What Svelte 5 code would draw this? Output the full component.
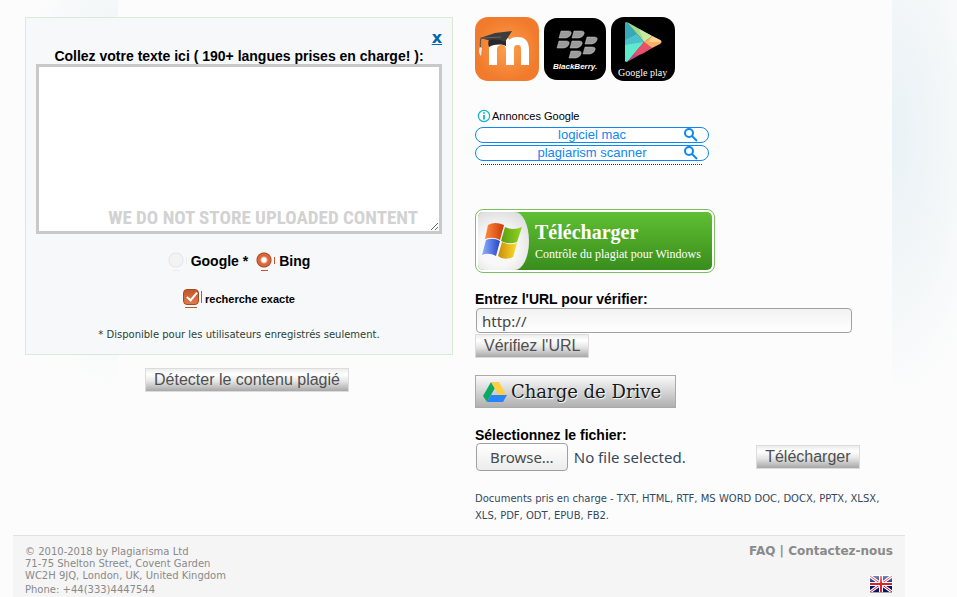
<script lang="ts">
  let text = $state('');
  let engine = $state('bing');
  let exact = $state(true);
  let url = $state('http://');
  let fileName = $state('No file selected.');

  const ads = ['logiciel mac', 'plagiarism scanner'];

  function clearText(e: MouseEvent) {
    e.preventDefault();
    text = '';
  }

  function pickFile(e: Event) {
    const input = e.target as HTMLInputElement;
    fileName = input.files?.[0]?.name ?? 'No file selected.';
  }
</script>

<div class="page">
  <main class="columns">
    <section class="checker">
      <div class="panel">
        <a class="close" href="#clear" onclick={clearText}>x</a>
        <label class="label" for="text">Collez votre texte ici ( 190+ langues prises en charge! ):</label>
        <div class="text-wrap">
          <textarea id="text" bind:value={text}></textarea>
          <span class="watermark">WE DO NOT STORE UPLOADED CONTENT</span>
        </div>

        <div class="engines">
          <label class="engine">
            <input type="radio" name="engine" value="google" disabled bind:group={engine} />
            <span>Google *</span>
          </label>
          <label class="engine">
            <input type="radio" name="engine" value="bing" bind:group={engine} />
            <span>Bing</span>
          </label>
        </div>

        <label class="exact">
          <input type="checkbox" bind:checked={exact} />
          <span>recherche exacte</span>
        </label>

        <p class="note">* Disponible pour les utilisateurs enregistrés seulement.</p>
      </div>
      <div class="submit">
        <button class="button">Détecter le contenu plagié</button>
      </div>
    </section>

    <section class="sources">
      <div class="apps">
        <a href="#moodle" aria-label="Moodle">
          <svg width="64" height="64" viewBox="0 0 64 64">
            <defs>
              <radialGradient id="orange">
                <stop offset="0" stop-color="#fba04e" />
                <stop offset="1" stop-color="#f27a2c" />
              </radialGradient>
            </defs>
            <rect width="64" height="64" rx="13" fill="url(#orange)" />
            <path d="M18 48V33c0-6 3-9 8.500-9s8.500 3 8.500 9v15M35 48V33c0-6 2-9 7.500-9s7.500 3 7.500 9v15" stroke="#fff" stroke-width="8" fill="none" />
            <path d="M14 22c-1 3-1 6 0 8 6-3 12-3 17-1v-7z" fill="#292929" />
            <path d="M5 21L20 16 37 14l-7 11c-5-3-12-3-17-2z" fill="#3d3d3d" />
            <path d="M8 21l18-1" stroke="#666" fill="none" />
            <path d="M6 21c-1 5-1 8 0 13" stroke="#4a4a4a" fill="none" />
            <path d="M5 30c-2 3-1 7 1 9l1-8z" fill="#eee" />
          </svg>
        </a>
        <a href="#blackberry" aria-label="BlackBerry">
          <svg width="64" height="64" viewBox="0 0 64 64">
            <rect x="1" y="1" width="62" height="62" rx="13" fill="#000" />
            <g fill="#9b9b9b" stroke="#c4c4c4" stroke-width="0.500">
              <path id="seed" d="M18 14h7q4 0 3 3t-5 4h-7z" />
              <use href="#seed" x="13" />
              <use href="#seed" x="-2" y="10" />
              <use href="#seed" x="11" y="10" />
              <use href="#seed" x="26" y="6" />
              <use href="#seed" x="24" y="16" />
              <use href="#seed" x="10" y="20" />
            </g>
            <text x="10" y="52" class="bb-name">BlackBerry.</text>
          </svg>
        </a>
        <a href="#google-play" aria-label="Google play">
          <svg width="64" height="64" viewBox="0 0 64 64">
            <rect width="64" height="64" rx="13" fill="#000" />
            <path d="M14 7q0-3 3-1l16 19-16 19q-3 2-3-1z" fill="#4bc1cb" />
            <path d="M14 7q0-3 3-1l9 11-12 6z" fill="#35a9b9" />
            <path d="M14 28l19-3-16 19q-3 2-3-1z" fill="#5feacb" />
            <path d="M16 5l25 14-8 6z" fill="#a5dc8c" />
            <path d="M28 12l13 7-8 6z" fill="#cce9a2" />
            <path d="M16 45l17-20 8 6z" fill="#c24786" />
            <path d="M22 38l11-13 8 6-10 6z" fill="#e95069" />
            <path d="M41 19l8 4q3 2 0 4l-8 4-8-6z" fill="#f9af69" />
            <path d="M41 19l8 4q2 1 1 2H38z" fill="#fdd28c" />
            <text x="7" y="59" class="play-name">Google play</text>
          </svg>
        </a>
      </div>

      <div class="ads">
        <div class="ads-title">
          <svg width="14" height="14" viewBox="0 0 14 14" fill="none" stroke="#12b5cb">
            <circle cx="7" cy="7" r="5.600" stroke-width="1.200" />
            <path d="M7 6v4.500M7 3.300v1.500" stroke-width="1.800" />
          </svg>
          Annonces Google
        </div>
        {#each ads as ad}
          <a class="ad" href="#ad">
            <span>{ad}</span>
            <svg width="14" height="14" viewBox="0 0 14 14" fill="none" stroke="#0d87f2" stroke-width="2">
              <circle cx="5" cy="5" r="4" />
              <path d="M8 8l5 5" />
            </svg>
          </a>
        {/each}
        <div class="dots"></div>
      </div>

      <a class="download" href="#download">
        <span class="download-inner">
          <span class="download-icon">
            <svg width="40" height="38" viewBox="0 0 40 38">
              <defs>
                <linearGradient id="red"><stop stop-color="#ff8b3d" /><stop offset="1" stop-color="#c93b08" /></linearGradient>
                <linearGradient id="green"><stop stop-color="#5a9e14" /><stop offset="1" stop-color="#91d521" /></linearGradient>
                <linearGradient id="blue"><stop stop-color="#91b2ff" /><stop offset="1" stop-color="#2444c8" /></linearGradient>
                <linearGradient id="yellow"><stop stop-color="#c58d0e" /><stop offset="1" stop-color="#ffdc29" /></linearGradient>
              </defs>
              <path d="M6 3Q13-1 22 3l-4 15Q11 14 3 17z" fill="url(#red)" />
              <path d="M23 5q8 4 17 0l-5 15q-8 3-16-1z" fill="url(#green)" />
              <path d="M4 18q7-3 14 1l-4 15Q7 30 0 33z" fill="url(#blue)" />
              <path d="M20 20q8 4 15 1l-4 14q-9 4-15-1z" fill="url(#yellow)" />
            </svg>
          </span>
          <span class="download-text">
            <strong>Télécharger</strong>
            <span>Contrôle du plagiat pour Windows</span>
          </span>
        </span>
      </a>

      <form class="url-form" onsubmit={(e) => e.preventDefault()}>
        <label class="label" for="url">Entrez l'URL pour vérifier:</label>
        <input id="url" class="url" type="text" bind:value={url} />
        <button class="button">Vérifiez l'URL</button>
      </form>

      <button class="drive">
        <svg width="24" height="22" viewBox="0 0 24 22">
          <path d="M8 1L0 15l4 6 8-14z" fill="#0da960" />
          <path d="M8 1h8l8 14h-8z" fill="#ffcf48" />
          <path d="M8 14h16l-4 7H4z" fill="#2684fc" />
        </svg>
        Charge de Drive
      </button>

      <label class="label" for="file">Sélectionnez le fichier:</label>
      <div class="file-row">
        <label class="file">
          <input id="file" type="file" onchange={pickFile} />
          <span class="browse">Browse…</span>
          <span>{fileName}</span>
        </label>
        <button class="button">Télécharger</button>
      </div>

      <p class="formats">
        Documents pris en charge - TXT, HTML, RTF, MS WORD DOC, DOCX, PPTX, XLSX, XLS, PDF, ODT, EPUB, FB2.
      </p>
    </section>
  </main>

  <footer>
    <address>
      © 2010-2018 by Plagiarisma Ltd<br />
      71-75 Shelton Street, Covent Garden<br />
      WC2H 9JQ, London, UK, United Kingdom
      <span class="phone">Phone: +44(333)4447544</span>
    </address>
    <div class="footer-right">
      <nav><a href="#faq">FAQ</a> | <a href="#contact">Contactez-nous</a></nav>
      <a href="#english" aria-label="English">
        <svg width="24" height="18" viewBox="0 0 24 18">
          <defs>
            <linearGradient id="shine" x2="0" y2="1">
              <stop stop-color="#fff" stop-opacity="0.500" />
              <stop offset="1" stop-color="#fff" stop-opacity="0.100" />
            </linearGradient>
          </defs>
          <rect width="24" height="18" rx="1" fill="#fff" />
          <rect x="1" y="1" width="22" height="16" fill="#00136e" />
          <path d="M1 1l22 16M23 1L1 17" stroke="#fff" stroke-width="3" />
          <path d="M1 1l22 16M23 1L1 17" stroke="#d8202c" />
          <path d="M12 1v16M1 9h22" stroke="#fff" stroke-width="4" />
          <path d="M12 1v16M1 9h22" stroke="#dc1f28" stroke-width="2" />
          <path d="M1 1h22v7H1z" fill="url(#shine)" />
          <path d="M1 17.500h22" stroke="#aaa" />
        </svg>
      </a>
    </div>
  </footer>
</div>

<style>
  :global(body) {
    margin: 0;
    background: #fcfcfc;
    font-family: "DejaVu Sans", sans-serif;
  }

  .page {
    padding: 17px 52px 0 13px;
    background:
      radial-gradient(ellipse 100px 240px at right 0 top 40%, #eaf2f7, #f0f5f7 40%, #fcfcfc) left top / 118px 384px no-repeat,
      radial-gradient(ellipse 100px 270px at left 0 top 35%, #eaf2f7, #f0f5f7 40%, #fcfcfc) right top / 65px 384px no-repeat;
  }

  .columns {
    display: grid;
    grid-template-columns: 428fr 418fr;
    gap: 22px;
    padding: 0 12px;
  }

  .checker {
    display: flex;
    flex-direction: column;
    gap: 13px;
  }

  .panel {
    display: flex;
    flex-direction: column;
    align-items: center;
    padding: 10px;
    border: 1px solid #d9ead9;
    background: #f6f8fa;
  }

  .submit {
    padding-left: 16px;
    text-align: center;
  }

  .close {
    align-self: flex-end;
    font-size: 16px;
    line-height: 20px;
    font-weight: 700;
    color: #0069aa;
  }

  .label {
    display: block;
    font-family: "Liberation Sans", sans-serif;
    font-size: 14px;
    line-height: 16px;
    font-weight: 700;
    color: #000;
  }

  .text-wrap {
    position: relative;
    width: 100%;
    height: 170px;
  }

  textarea {
    box-sizing: border-box;
    display: block;
    width: 100%;
    height: 170px;
    margin: 0;
    padding: 4px;
    border: 3px solid #c9c9c9;
    background: #fff;
    font-family: "DejaVu Sans", sans-serif;
    font-size: 14px;
    resize: both;
    outline: none;
  }

  .watermark {
    position: absolute;
    right: 24px;
    bottom: 4px;
    font-family: "Roboto Condensed", Roboto, sans-serif;
    font-size: 19px;
    line-height: 24px;
    font-weight: 700;
    color: #d2d2d2;
    white-space: nowrap;
    pointer-events: none;
  }

  .engines {
    display: flex;
    gap: 8px;
    margin: 18px 0 2px;
    font-family: "Liberation Sans", sans-serif;
    font-size: 14px;
    line-height: 18px;
    font-weight: 700;
  }

  .engine {
    display: flex;
    gap: 3px;
  }

  .engine input,
  .exact input {
    appearance: none;
    width: 20px;
    height: 20px;
    margin: 0;
    background:
      radial-gradient(circle at 8px 8px, #fff 0 2px, #d9693d 4px 6px, #a9471f 7px, transparent 8px),
      linear-gradient(#b65a38, #b65a38) 18px 5px / 1px 7px no-repeat,
      linear-gradient(#b65a38, #b65a38) 5px 18px / 7px 1px no-repeat;
  }

  .engine input:disabled {
    background:
      radial-gradient(circle at 8px 8px, #f3f3f3 6px, #e6e6e6 7px, transparent 8px),
      linear-gradient(#ececec, #ececec) 18px 5px / 1px 7px no-repeat,
      linear-gradient(#ececec, #ececec) 5px 18px / 7px 1px no-repeat;
  }

  .exact {
    display: flex;
    gap: 2px;
    margin-top: 15px;
    font-family: "Liberation Sans", sans-serif;
    font-size: 11px;
    line-height: 20px;
    font-weight: 700;
  }

  .exact input {
    position: relative;
    background:
      linear-gradient(#b65a38, #b65a38) 18px 2px / 1px 12px no-repeat,
      linear-gradient(#b65a38, #b65a38) 2px 18px / 12px 1px no-repeat;
  }

  .exact input::before {
    content: "";
    box-sizing: border-box;
    display: block;
    width: 16px;
    height: 16px;
    border: 1px solid #a9471f;
    border-radius: 4px;
    background: linear-gradient(#c2562b, #e07a4c);
  }

  .exact input:checked::after {
    content: "";
    position: absolute;
    left: 6px;
    top: 1px;
    width: 4px;
    height: 9px;
    border: solid #fff;
    border-width: 0 2px 2px 0;
    transform: rotate(40deg);
  }

  .note {
    margin: 17px 0 1px;
    font-size: 10px;
    line-height: 17px;
    color: #2b4433;
  }

  .button {
    box-sizing: border-box;
    height: 24px;
    padding: 0 8px;
    border: 1px solid #dcdcdc;
    background: linear-gradient(#ededed, #fff 25%, #e6e6e6 55%, #a8a8a8);
    font-family: "Liberation Sans", sans-serif;
    font-size: 16px;
    line-height: 22px;
    color: #4f4f4f;
    cursor: pointer;
  }

  .sources {
    display: flex;
    flex-direction: column;
    align-items: flex-start;
  }

  .apps {
    display: flex;
    gap: 4px;
    height: 64px;
  }

  .apps svg,
  footer svg {
    display: block;
  }

  .bb-name {
    font: italic 700 8px "Liberation Sans", sans-serif;
    fill: #fff;
  }

  .play-name {
    font: 10px "Liberation Serif", serif;
    fill: #fff;
  }

  .ads {
    display: flex;
    flex-direction: column;
    gap: 2px;
    width: 234px;
    margin-top: 26px;
  }

  .ads-title {
    display: flex;
    align-items: center;
    gap: 1px;
    height: 18px;
    padding-left: 2px;
    font-family: "Liberation Sans", sans-serif;
    font-size: 11px;
    color: #000;
  }

  .ad {
    box-sizing: border-box;
    display: flex;
    align-items: center;
    height: 16px;
    padding-right: 10px;
    border: 1px solid #0d87f2;
    border-radius: 8px;
    background: #fff;
    font-family: "Liberation Sans", sans-serif;
    font-size: 13px;
    line-height: 14px;
    color: #0d87f2;
    text-decoration: none;
  }

  .ad span {
    flex: 1;
    padding-left: 24px;
    text-align: center;
  }

  .dots {
    margin: 1px 7px 0 6px;
    border-top: 1px dotted #333;
  }

  .download {
    box-sizing: border-box;
    width: 240px;
    height: 64px;
    margin-top: 44px;
    padding: 2px;
    border: 1px solid #7fbf60;
    border-radius: 8px;
    background: #fff;
    color: #fff;
    text-decoration: none;
  }

  .download-inner {
    display: flex;
    height: 58px;
    border-radius: 5px;
    background: linear-gradient(#60bf32, #388d1c);
    overflow: hidden;
  }

  .download-icon {
    box-sizing: border-box;
    display: flex;
    align-items: center;
    width: 51px;
    height: 58px;
    padding-left: 4px;
    border-radius: 0 14px 14px 0 / 0 29px 29px 0;
    background: radial-gradient(circle at 40% 60%, #f8f8f8 40%, #d3d3d3);
  }

  .download-text {
    display: flex;
    flex-direction: column;
    padding: 8px 0 0 6px;
    font-family: "Liberation Serif", serif;
    font-size: 12px;
    line-height: 20px;
    white-space: nowrap;
  }

  .download-text strong {
    font-size: 20px;
    line-height: 24px;
  }

  .url-form {
    display: flex;
    flex-direction: column;
    align-items: flex-start;
    width: 100%;
    margin-top: 18px;
  }

  .url {
    box-sizing: border-box;
    width: 90%;
    height: 25px;
    margin: 1px;
    padding: 0 5px;
    border: 1px solid #a0a0a0;
    border-radius: 4px;
    background: linear-gradient(#f2f2f2, #fff);
    font-family: "Noto Sans", sans-serif;
    font-size: 15px;
    color: #444;
  }

  .drive {
    box-sizing: border-box;
    display: flex;
    align-items: center;
    gap: 4px;
    height: 33px;
    margin: 17px 0 19px;
    padding: 0 14px 0 7px;
    border: 1px solid #aaa;
    background: linear-gradient(#fafafa, #b0b0b0);
    font-family: "DejaVu Serif", serif;
    font-size: 18px;
    color: #1a1a1a;
    text-shadow: 1px 1px 1px #fff;
    cursor: pointer;
  }

  .file-row {
    box-sizing: border-box;
    display: flex;
    align-items: center;
    justify-content: space-between;
    width: 92%;
    height: 28px;
    padding-left: 1px;
  }

  .file {
    display: flex;
    align-items: center;
    gap: 6px;
    font-family: "Noto Sans", sans-serif;
    font-size: 15px;
    color: #34495e;
  }

  .file input {
    position: absolute;
    width: 1px;
    height: 1px;
    opacity: 0;
  }

  .browse {
    box-sizing: border-box;
    height: 28px;
    padding: 0 13px;
    border: 1px solid #a0a0a0;
    border-radius: 4px;
    background: linear-gradient(#fff, #ececec);
    line-height: 26px;
    color: #4a4a4a;
  }

  .formats {
    margin: 19px 0 11px;
    font-size: 10px;
    line-height: 17px;
    color: #34495e;
  }

  footer {
    display: flex;
    justify-content: space-between;
    padding: 9px 12px 0;
    border-top: 1px solid #e2e2e2;
    background: #f5f5f5;
    color: #8a8a8a;
  }

  address {
    padding-top: 1px;
    font-size: 10px;
    line-height: 12px;
    font-style: normal;
  }

  .phone {
    display: block;
    line-height: 16px;
  }

  .footer-right {
    display: flex;
    flex-direction: column;
    align-items: flex-end;
    gap: 18px;
  }

  nav {
    font-size: 12px;
    line-height: 12px;
    font-weight: 700;
  }

  nav a {
    color: #8a8a8a;
    text-decoration: none;
  }
</style>
